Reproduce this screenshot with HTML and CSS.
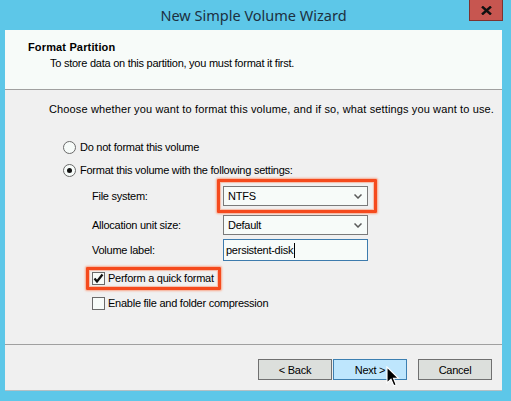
FILE: index.html
```html
<!DOCTYPE html>
<html>
<head>
<meta charset="utf-8">
<title>New Simple Volume Wizard</title>
<link rel="stylesheet" href="styles.css">
</head>
<body>
<div class="window">
  <div class="titlebar">
    <span></span>
    <span class="title">New Simple Volume Wizard</span>
    <div class="close"><svg width="11" height="9" viewBox="0 0 11 9"><path d="M1 0.5 L10 8.5 M10 0.5 L1 8.5" stroke="#111" stroke-width="2.4" fill="none"/></svg></div>
  </div>
  <div class="client">
    <div class="header">
      <div class="h-title">Format Partition</div>
      <div class="h-sub">To store data on this partition, you must format it first.</div>
    </div>
    <div class="content">
      <p class="intro">Choose whether you want to format this volume, and if so, what settings you want to use.</p>
      <div class="radio-row first"><span class="radio"></span><span>Do not format this volume</span></div>
      <div class="radio-row second"><span class="radio checked"></span><span>Format this volume with the following settings:</span></div>
      <div class="form">
        <div class="row r1"><span class="lbl">File system:</span><div class="select"><span>NTFS</span><svg class="chev" width="8" height="5" viewBox="0 0 8 5"><path d="M0.5 0.5 L4 4 L7.5 0.5" stroke="#5a5a5a" stroke-width="1.5" fill="none"/></svg></div></div>
        <div class="row r2"><span class="lbl">Allocation unit size:</span><div class="select"><span>Default</span><svg class="chev" width="8" height="5" viewBox="0 0 8 5"><path d="M0.5 0.5 L4 4 L7.5 0.5" stroke="#5a5a5a" stroke-width="1.5" fill="none"/></svg></div></div>
        <div class="row r3"><span class="lbl">Volume label:</span><div class="input"><span class="val">persistent-disk</span></div></div>
      </div>
      <div class="check-row c1"><span class="check"><svg width="11" height="11" viewBox="0 0 11 11"><path d="M1.5 5.5 L4 8.5 L9.5 1.5" stroke="#111" stroke-width="2.2" fill="none"/></svg></span><span>Perform a quick format</span></div>
      <div class="check-row c2"><span class="check"></span><span>Enable file and folder compression</span></div>
    </div>
    <div class="footer">
      <button class="btn">&lt; Back</button>
      <button class="btn next">Next &gt;</button>
      <button class="btn cancel">Cancel</button>
    </div>
  </div>
  <div class="mark mark-fs"></div>
  <div class="mark mark-qf"></div>
  <svg class="cursor" width="14" height="22" viewBox="0 0 14 22"><path d="M1 1 L1 17 L5 13.2 L7.8 19.8 L10.2 18.8 L7.5 12.3 L12.5 12.3 Z" fill="#000" stroke="#fff" stroke-width="1.1" stroke-linejoin="miter"/></svg>
</div>
</body>
</html>
```

FILE: styles.css
```css
* { box-sizing: border-box; }
html, body { margin: 0; padding: 0; }
body {
  width: 511px;
  height: 401px;
  background: #5dc7e8;
  overflow: hidden;
  font-family: "Liberation Sans", Arial, sans-serif;
  font-size: 11px;
  letter-spacing: -0.25px;
  color: #000;
}
.window {
  position: relative;
  width: 511px;
  height: 401px;
  background: #5dc7e8;
}
.titlebar {
  height: 30px;
  display: grid;
  grid-template-columns: 1fr auto 1fr;
  align-items: start;
}
.title {
  font-family: "Noto Sans", "Open Sans", sans-serif;
  font-size: 14.5px;
  letter-spacing: 0;
  color: #1c3040;
  line-height: 20px;
  padding-top: 5px;
  padding-right: 4px;
}
.close {
  justify-self: end;
  margin-right: 8px;
  width: 34px;
  height: 21px;
  background: #c75650;
  border: 1px solid #7d3330;
  border-top: none;
  display: flex;
  align-items: center;
  justify-content: center;
}
.client {
  margin: 0 9px 0 5px;
  height: 361px;
  background: #f0f0f0;
  display: flex;
  flex-direction: column;
}
.header {
  height: 60px;
  background: #f7fbf9;
  border-bottom: 1px solid #a0a0a0;
  padding: 10px 0 0 23px;
}
.h-title {
  font-weight: bold;
  letter-spacing: 0.15px;
  line-height: 14px;
}
.h-sub {
  margin-top: 2px;
  margin-left: 22px;
  line-height: 14px;
}
.content {
  flex: 1;
  padding-left: 44px;
}
.intro {
  margin: 12px 0 0 0;
  line-height: 14px;
  letter-spacing: 0.13px;
  white-space: nowrap;
}
.radio-row {
  display: flex;
  align-items: center;
  gap: 4px;
  height: 16px;
  margin-left: 14px;
}
.radio-row.first { margin-top: 23px; }
.radio-row.second { margin-top: 7px; }
.radio {
  width: 13px;
  height: 13px;
  border-radius: 50%;
  border: 1px solid #6a6a6a;
  background: #f7fbf9;
  display: flex;
  align-items: center;
  justify-content: center;
}
.radio.checked::after {
  content: "";
  width: 5px;
  height: 5px;
  border-radius: 50%;
  background: #111;
}
.form {
  margin-left: 43px;
  margin-top: 8px;
}
.row {
  display: flex;
  align-items: center;
}
.row.r2 { margin-top: 9px; }
.row.r3 { margin-top: 4px; }
.lbl { width: 131px; }
.select {
  width: 145px;
  height: 20px;
  border: 1px solid #7a7a7a;
  background: #f7fbf9;
  display: flex;
  align-items: center;
  justify-content: space-between;
  padding: 0 5px 0 4px;
}
.chev { display: block; }
.input {
  width: 145px;
  height: 22px;
  border: 1px solid #3d7bad;
  background: #f7fbf9;
  display: flex;
  align-items: center;
  padding-left: 2px;
}
.val {
  border-right: 1px solid #000;
  padding-right: 1px;
  line-height: 15px;
}
.check-row {
  display: flex;
  align-items: center;
  gap: 3px;
  height: 16px;
  margin-left: 43px;
}
.check-row.c1 { margin-top: 9px; }
.check-row.c2 { margin-top: 9px; }
.check {
  width: 13px;
  height: 13px;
  border: 1px solid #6a6a6a;
  background: #f7fbf9;
  display: flex;
  align-items: center;
  justify-content: center;
}
.footer {
  height: 47px;
  border-top: 1px solid #a0a0a0;
  border-bottom: 1px solid #b4c0c4;
  display: flex;
  justify-content: flex-end;
  align-items: flex-start;
  padding: 14px 10px 0 0;
}
.btn {
  width: 74px;
  height: 21px;
  border: 1px solid #707070;
  background: #dcdfdc;
  font-family: "Liberation Sans", Arial, sans-serif;
  font-size: 11px;
  letter-spacing: -0.25px;
  color: #000;
  padding: 0;
  margin: 0;
}
.btn.next {
  margin-left: 1px;
  background: #bee6fd;
  border-color: #3c7fb1;
}
.btn.cancel { margin-left: 11px; }
.mark {
  position: absolute;
  border: 3px solid #f54a1d;
  box-shadow: 0 0 2px 1px rgba(255, 110, 60, 0.55), inset 0 0 1px 1px rgba(255, 110, 60, 0.4);
  border-radius: 1px;
}
.mark-fs { left: 217px; top: 179px; width: 160px; height: 34px; }
.mark-qf { left: 86px; top: 267px; width: 135px; height: 23px; }
.cursor {
  position: absolute;
  left: 386px;
  top: 366px;
}
```
